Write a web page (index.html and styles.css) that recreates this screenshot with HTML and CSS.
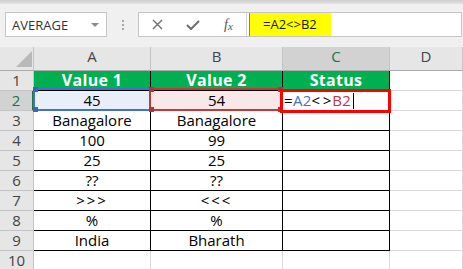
FILE: index.html
```html
<!DOCTYPE html>
<html>
<head><meta charset="utf-8"/>
<title>Workbook</title>
<link rel="stylesheet" href="styles.css">
</head>
<body>
<div class="topstrip"></div>
<div class="fbar">
  <div class="namebox"><span>AVERAGE</span><span class="caret"></span></div>
  <div class="grip"><i></i><i></i><i></i></div>
  <div class="formula">
    <div class="tools">
      <span class="slot"><svg width="11" height="11" viewBox="0 0 11 11"><path d="M1 1 L10 10 M10 1 L1 10" stroke="#6e6e6e" stroke-width="1.4" fill="none"/></svg></span>
      <span class="slot"><svg width="14" height="10" viewBox="0 0 14 10"><path d="M1 5 L5 9 L13 1" stroke="#6e6e6e" stroke-width="2" fill="none"/></svg></span>
      <span class="slot fx">f<small>x</small></span>
    </div>
    <div class="input"><span class="hl">=A2&lt;&gt;B2</span></div>
  </div>
</div>

<div class="sheet">
  <!-- column headers -->
  <div class="c h corner"><span class="tri"></span></div>
  <div class="c h">A</div>
  <div class="c h">B</div>
  <div class="c h sel">C</div>
  <div class="c h">D</div>

  <div class="c h rh">1</div>
  <div class="c t g">Value 1</div>
  <div class="c t g">Value 2</div>
  <div class="c t g">Status</div>
  <div class="c"></div>

  <div class="c h rh sel">2</div>
  <div class="c t blue">45</div>
  <div class="c t pink">54</div>
  <div class="c t edit">=<span class="ra">A2</span><span class="op">&lt;&gt;</span><span class="rb">B2</span><span class="cursor"></span></div>
  <div class="c"></div>

  <div class="c h rh">3</div>
  <div class="c t">Banagalore</div>
  <div class="c t">Banagalore</div>
  <div class="c t"></div>
  <div class="c"></div>

  <div class="c h rh">4</div>
  <div class="c t">100</div>
  <div class="c t">99</div>
  <div class="c t"></div>
  <div class="c"></div>

  <div class="c h rh">5</div>
  <div class="c t">25</div>
  <div class="c t">25</div>
  <div class="c t"></div>
  <div class="c"></div>

  <div class="c h rh">6</div>
  <div class="c t">??</div>
  <div class="c t">??</div>
  <div class="c t"></div>
  <div class="c"></div>

  <div class="c h rh">7</div>
  <div class="c t wide">&gt;&gt;&gt;</div>
  <div class="c t wide">&lt;&lt;&lt;</div>
  <div class="c t"></div>
  <div class="c"></div>

  <div class="c h rh">8</div>
  <div class="c t">%</div>
  <div class="c t">%</div>
  <div class="c t"></div>
  <div class="c"></div>

  <div class="c h rh">9</div>
  <div class="c t">India</div>
  <div class="c t">Bharath</div>
  <div class="c t"></div>
  <div class="c"></div>

  <div class="c h rh">10</div>
  <div class="c"></div>
  <div class="c"></div>
  <div class="c"></div>
  <div class="c"></div>

  <!-- range highlights of the formula being edited -->
  <div class="range range-a"><b class="k tl"></b><b class="k bl"></b></div>
  <div class="range range-b"><b class="k tl"></b><b class="k tr"></b><b class="k bl"></b><b class="k br"></b></div>
  <div class="active"></div>
</div>
</body>
</html>
```

FILE: styles.css
```css
body {
    margin: 0;
    width: 463px;
    height: 269px;
    overflow: hidden;
    background: #f0f0f0;
    font-family: "Open Sans", "Liberation Sans", sans-serif;
}

.topstrip {
    height: 4px;
    background: linear-gradient(#cdcdcd, #e4e4e4);
}

/* name box + formula bar */
.fbar {
    display: flex;
    align-items: flex-start;
    height: 43px;
    padding-top: 8px;
    box-sizing: border-box;
}

.namebox {
    margin-left: 5px;
    width: 102px;
    height: 25px;
    box-sizing: border-box;
    background: #fff;
    border: 1px solid #c6c6c6;
    display: flex;
    align-items: center;
    padding-left: 6px;
    font-size: 13px;
    color: #333;
}

.caret {
    margin-left: auto;
    margin-right: 7px;
    width: 0;
    height: 0;
    border-top: 4px solid #8a8a8a;
    border-left: 4px solid transparent;
    border-right: 4px solid transparent;
}

.grip {
    width: 31px;
    display: flex;
    flex-direction: column;
    align-items: center;
    gap: 2px;
    padding-top: 8px;
}
.grip i {
    width: 2px;
    height: 2px;
    background: #a8a8a8;
}

.formula {
    width: 324px;
    height: 25px;
    box-sizing: border-box;
    background: #fff;
    border: 1px solid #c6c6c6;
    display: flex;
}

.tools {
    display: flex;
    width: 107px;
    border-right: 1px solid #d4d4d4;
}
.slot {
    width: 36px;
    display: flex;
    align-items: center;
    justify-content: center;
}
.slot:last-child { width: 35px; }

.fx {
    font-family: "Liberation Serif", serif;
    font-style: italic;
    font-size: 14px;
    color: #555;
}
.fx small {
    font-size: 11px;
    position: relative;
    top: 1px;
}

.input {
    flex: 1;
    padding-left: 2px;
}
.hl {
    display: block;
    width: 82px;
    height: 23px;
    box-sizing: border-box;
    background: #ffff00;
    border-left: 1px solid #8c8c1a;
    padding-left: 13px;
    font-size: 13px;
    line-height: 23px;
    color: #1a1a1a;
}

/* grid */
.sheet {
    position: relative;
    display: grid;
    grid-template-columns: 34px 117px 132px 107px 73px;
    grid-template-rows: 24px repeat(10, 20px);
    background: #fff;
}

.c {
    box-sizing: border-box;
    border-right: 1px solid #d9d9d9;
    border-bottom: 1px solid #d9d9d9;
    font-size: 15px;
    line-height: 19px;
    text-align: center;
    white-space: nowrap;
    color: #000;
}

.h {
    background: #e6e6e6;
    border-right-color: #c4c4c4;
    border-bottom-color: #c4c4c4;
    color: #444;
}
.h:nth-child(-n+5) { border-bottom-color: #ababab; }
.h.sel {
    background: #d2d2d2;
    color: #217346;
}
.rh.sel { border-right: 2px solid #217346; }

.corner {
    display: flex;
    align-items: flex-end;
    justify-content: flex-end;
    padding: 0 1px 3px 0;
}
.tri {
    width: 0;
    height: 0;
    border-left: 16px solid transparent;
    border-bottom: 16px solid #b9b9b9;
}

.t {
    border-right-color: #000;
    border-bottom-color: #000;
}

.g {
    background: #00b050;
    color: #fff;
    font-weight: 700;
    font-size: 16px;
    letter-spacing: 0.3px;
}

.blue { background: #e9eff9; }
.pink { background: #f9e8e8; }
.wide { letter-spacing: 2px; }

.edit {
    text-align: left;
    padding-left: 1px;
    letter-spacing: 0.3px;
}
.ra { color: #4472c4; }
.rb { color: #c0393b; }
.op {
    letter-spacing: 2.5px;
    margin-right: -1.5px;
}
.cursor {
    display: inline-block;
    width: 1px;
    height: 16px;
    margin-left: 2px;
    background: #000;
    vertical-align: -3px;
}

/* formula range markers drawn over the grid */
.range {
    position: absolute;
    box-sizing: border-box;
    border: 2px solid;
}
.range-a {
    left: 33px;
    top: 41px;
    width: 118px;
    height: 23px;
    border-color: #4472c4;
}
.range-b {
    left: 149px;
    top: 41px;
    width: 134px;
    height: 23px;
    border-color: #c0393b;
}
.k {
    position: absolute;
    width: 5px;
    height: 5px;
    background: inherit;
}
.range-a .k { background: #3a66b8; }
.range-b .k { background: #b5303a; }
.k.tl { left: -2px; top: -3px; }
.k.tr { right: -2px; top: -3px; }
.k.bl { left: -2px; bottom: -3px; }
.k.br { right: -2px; bottom: -3px; }

.active {
    position: absolute;
    left: 280px;
    top: 42px;
    width: 111px;
    height: 24px;
    box-sizing: border-box;
    border: 3px solid #ff0000;
}
```
